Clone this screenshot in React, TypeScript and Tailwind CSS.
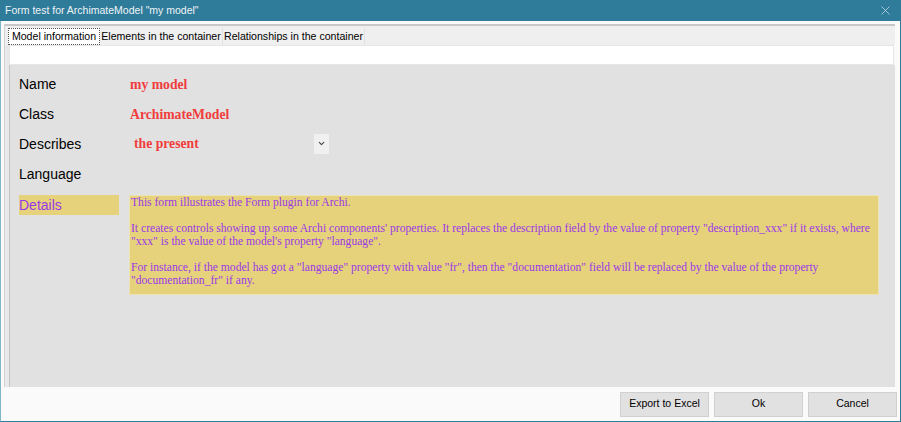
import { X, ChevronDown } from "lucide-react"

const labelCls = "w-[110px] shrink-0 text-[14px] text-black font-['Liberation_Sans',Arial,sans-serif]"
const valueCls = "text-[13.7px] font-bold text-[#f03c3c] font-['Liberation_Serif','Times_New_Roman',serif]"

function Row({ label, children }: { label: string; children?: React.ReactNode }) {
  return (
    <div className="flex h-[30px] items-center">
      <div className={labelCls}>{label}</div>
      <div className="pl-[1px]">{children}</div>
    </div>
  )
}

export default function App() {
  const tabs = [
    { t: "Elements in the container", w: "w-[123px]" },
    { t: "Relationships in the container", w: "w-[142px]" },
  ]
  return (
    <div className="w-[901px] h-[422px] flex flex-col bg-[#fafafa] border border-[#2e7b9a] border-t-0 border-l-[#7fb6cb] font-['Liberation_Sans',Arial,sans-serif]">
      <div className="h-[21px] shrink-0 flex items-center justify-between bg-[#2e7b9a] pl-[5px] pr-[8px] -mx-px">
        <span className="text-[10.5px] text-[#eef4f7]">Form test for ArchimateModel "my model"</span>
        <X className="size-[15px] text-[#c9dde6]" strokeWidth={1.2} />
      </div>

      <div className="flex-1 flex flex-col mt-[3px] ml-[3px] mr-[5px] border-l border-[#d2d2d2]">
        <div className="h-[2px] bg-[#c8c8c8]" />
        <div className="h-[19px] bg-[#efefef] flex items-end pl-[3px]">
          <div className="w-[92px] h-[17px] flex items-center justify-center whitespace-nowrap bg-white border border-dotted border-[#555] text-[10.6px] text-black">
            Model information
          </div>
          {tabs.map(({ t, w }) => (
            <div
              key={t}
              className={`${w} h-[17px] flex items-center justify-center whitespace-nowrap bg-[#f0f0f0] border-r border-[#e2e2e2] text-[10.6px] text-black`}
            >
              {t}
            </div>
          ))}
        </div>
        <div className="flex-1 flex flex-col bg-[#fafafa] border-l-[4px] border-[#e9e9e9]">
          <div className="h-[20px] bg-white border border-[#e6e6e6] mr-[1px]" />
          <div className="flex-1 bg-[#e1e1e1] border-l border-[#c4c4c4] pt-[4px] pl-[9px] flex flex-col">
            <Row label="Name">
              <span className={valueCls}>my model</span>
            </Row>
            <Row label="Class">
              <span className={valueCls}>ArchimateModel</span>
            </Row>
            <Row label="Describes">
              <div className="w-[200px] -ml-[1px] flex items-center justify-between">
                <span className={`${valueCls} pl-[5px]`}>the present</span>
                <div className="w-[15px] h-[20px] bg-[#f0f0f0] flex items-center justify-center">
                  <ChevronDown className="size-[9px] text-[#444]" strokeWidth={3} />
                </div>
              </div>
            </Row>
            <Row label="Language" />
            <div className="flex mt-[6px]">
              <div className="w-[100px] h-[20px] bg-[#e6d27a] flex items-center text-[14px] text-[#9a38e8]">
                Details
              </div>
              <div className="ml-[10px] w-[750px] h-[100px] bg-[#e6d27a] border border-[#ece3b5] px-[1px] text-[11.6px] leading-[13px] text-[#9a38e8] font-['Liberation_Serif','Times_New_Roman',serif]">
                <p>This form illustrates the Form plugin for Archi.</p>
                <p className="mt-[13px]">
                  It creates controls showing up some Archi components' properties. It replaces the description field by the value of property "description_xxx" if it exists, where "xxx" is the value of the model's property "language".
                </p>
                <p className="mt-[13px]">
                  For instance, if the model has got a "language" property with value "fr", then the "documentation" field will be replaced by the value of the property "documentation_fr" if any.
                </p>
              </div>
            </div>
          </div>
          <div className="h-[34px] shrink-0 flex items-center justify-end gap-[5px] -ml-[8px] -mr-[2px] bg-[#fafafa]">
            {["Export to Excel", "Ok", "Cancel"].map((b) => (
              <button
                key={b}
                className="w-[89px] h-[25px] bg-[#e1e1e1] border border-[#d0d0d0] text-[10.5px] text-black"
              >
                {b}
              </button>
            ))}
          </div>
        </div>
      </div>
    </div>
  )
}
